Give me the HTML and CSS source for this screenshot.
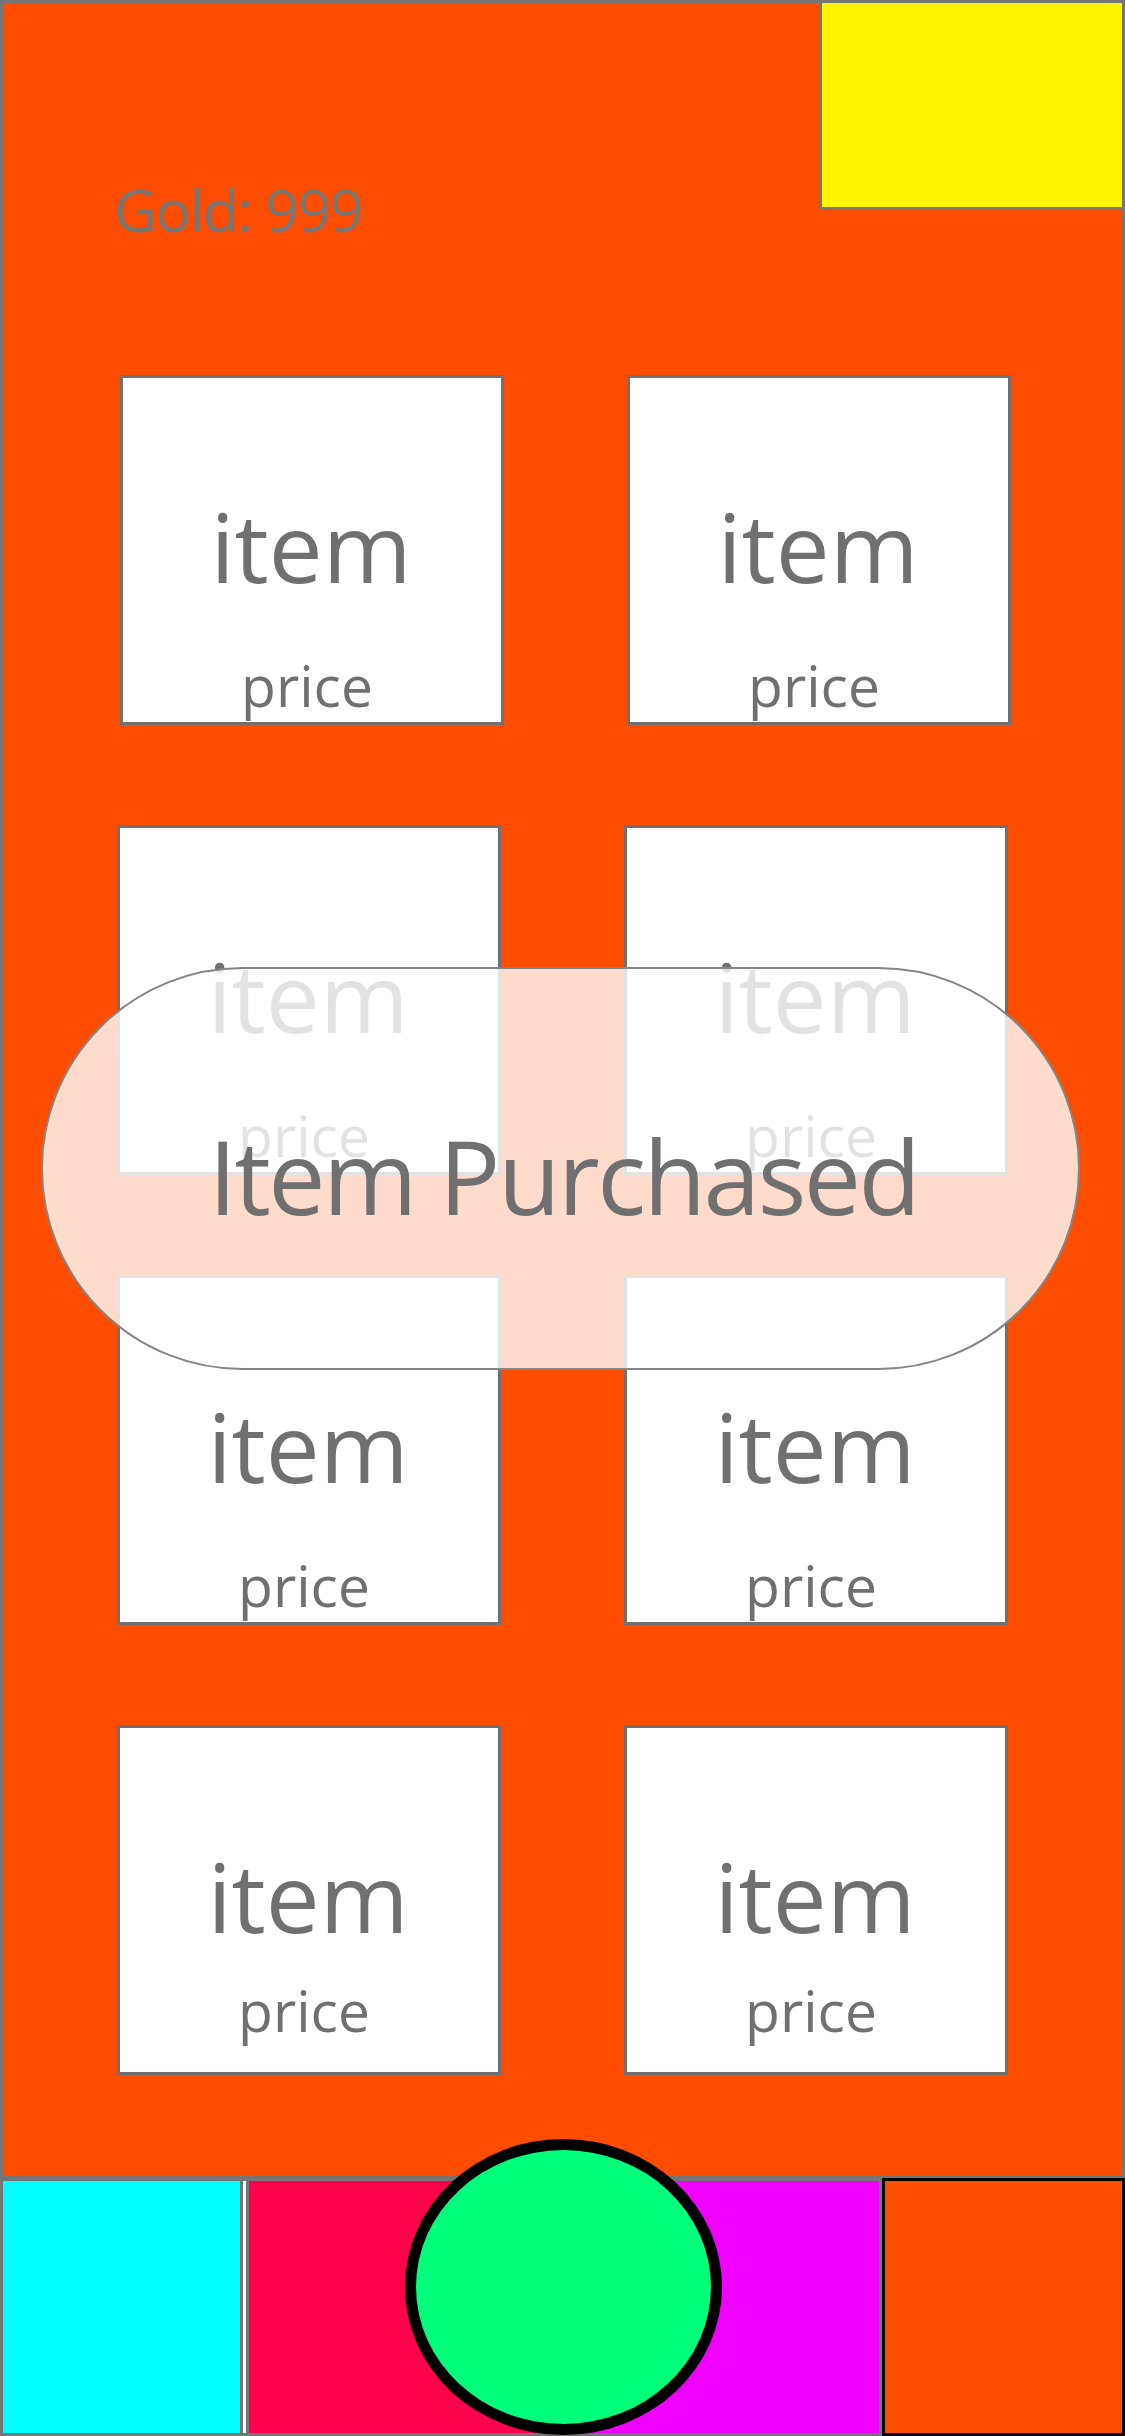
FILE: index.html
```html
<!DOCTYPE html>
<html lang="en">
<head>
<meta charset="utf-8">
<title>Shop</title>
<link rel="stylesheet" href="styles.css">
</head>
<body>
<div class="screen">
  <main class="shop">
    <header class="shop-header">
      <div class="gold">Gold: 999</div>
      <div class="corner-box"></div>
    </header>
    <section class="grid">
      <div class="row row-first">
        <div class="card"><span class="card-name">item</span><span class="card-price">price</span></div>
        <div class="card"><span class="card-name">item</span><span class="card-price">price</span></div>
      </div>
      <div class="row">
        <div class="card"><span class="card-name">item</span><span class="card-price">price</span></div>
        <div class="card"><span class="card-name">item</span><span class="card-price">price</span></div>
      </div>
      <div class="row">
        <div class="card"><span class="card-name">item</span><span class="card-price">price</span></div>
        <div class="card"><span class="card-name">item</span><span class="card-price">price</span></div>
      </div>
      <div class="row row-last">
        <div class="card"><span class="card-name">item</span><span class="card-price">price</span></div>
        <div class="card"><span class="card-name">item</span><span class="card-price">price</span></div>
      </div>
    </section>
  </main>
  <nav class="bottom-bar">
    <div class="tab tab-cyan"></div>
    <div class="tab-divider"></div>
    <div class="tab tab-middle">
      <div class="half half-red"></div>
      <div class="half half-magenta"></div>
    </div>
    <div class="tab tab-orange"></div>
  </nav>
  <div class="toast">Item Purchased</div>
  <div class="center-button"></div>
</div>
</body>
</html>
```

FILE: styles.css
```css
html, body {
  margin: 0;
  padding: 0;
}

body {
  font-family: "Open Sans", "Noto Sans", sans-serif;
  color: #707070;
}

.screen {
  position: relative;
  width: 1125px;
  height: 2436px;
  overflow: hidden;
  background: #767676;
  display: flex;
  flex-direction: column;
}

.shop {
  margin: 3px 3px 0 3px;
  height: 2172px;
  background: #ff4d00;
  display: flex;
  flex-direction: column;
}

.shop-header {
  display: flex;
  justify-content: space-between;
  align-items: flex-start;
  height: 207px;
}

.gold {
  margin-left: 111px;
  margin-top: 177px;
  font-size: 59px;
  line-height: 1;
  letter-spacing: -1.5px;
  color: #767676;
}

.corner-box {
  width: 300px;
  height: 204px;
  background: #fff500;
  border-left: 3px solid #767676;
  border-bottom: 3px solid #767676;
}

.grid {
  display: flex;
  flex-direction: column;
  gap: 100px;
  margin-top: 165px;
  padding-left: 114px;
}

.row {
  display: flex;
  gap: 123px;
}

.row-first {
  margin-left: 3px;
}

.card {
  box-sizing: border-box;
  width: 384px;
  height: 350px;
  background: #ffffff;
  border: 3px solid #707070;
  display: flex;
  flex-direction: column;
  align-items: center;
}

.card-name {
  font-size: 96px;
  line-height: 96px;
  margin-top: 120px;
  margin-left: -2px;
}

.card-price {
  font-size: 57px;
  line-height: 57px;
  margin-top: 63px;
  margin-right: 10px;
}

.row-last .card-price {
  margin-top: 38px;
}

.bottom-bar {
  display: flex;
  margin-top: 6px;
  height: 252px;
  padding-left: 3px;
}

.tab-cyan {
  width: 237px;
  background: #00ffff;
}

.tab-divider {
  width: 3px;
  background: #ffffff;
  border-left: 3px solid #767676;
  border-right: 3px solid #767676;
}

.tab-middle {
  width: 630px;
  display: flex;
}

.half {
  flex: 1;
}

.half-red {
  background: #ff004d;
}

.half-magenta {
  background: #f000ff;
}

.tab-orange {
  box-sizing: border-box;
  width: 243px;
  margin: -3px 0 -3px 3px;
  background: #ff4d00;
  border: 3px solid #000000;
}

.toast {
  position: absolute;
  left: 41px;
  top: 967px;
  box-sizing: border-box;
  width: 1039px;
  height: 403px;
  border: 2px solid #858585;
  border-radius: 9999px;
  background: rgba(255, 255, 255, 0.8);
  display: flex;
  align-items: center;
  justify-content: center;
  padding-top: 14px;
  padding-left: 6px;
  font-size: 102px;
  letter-spacing: -2.5px;
  color: #707070;
}

.center-button {
  position: absolute;
  left: 405px;
  top: 2139px;
  box-sizing: border-box;
  width: 317px;
  height: 296px;
  border: 11px solid #000000;
  border-radius: 50%;
  background: #00ff7a;
}
```
